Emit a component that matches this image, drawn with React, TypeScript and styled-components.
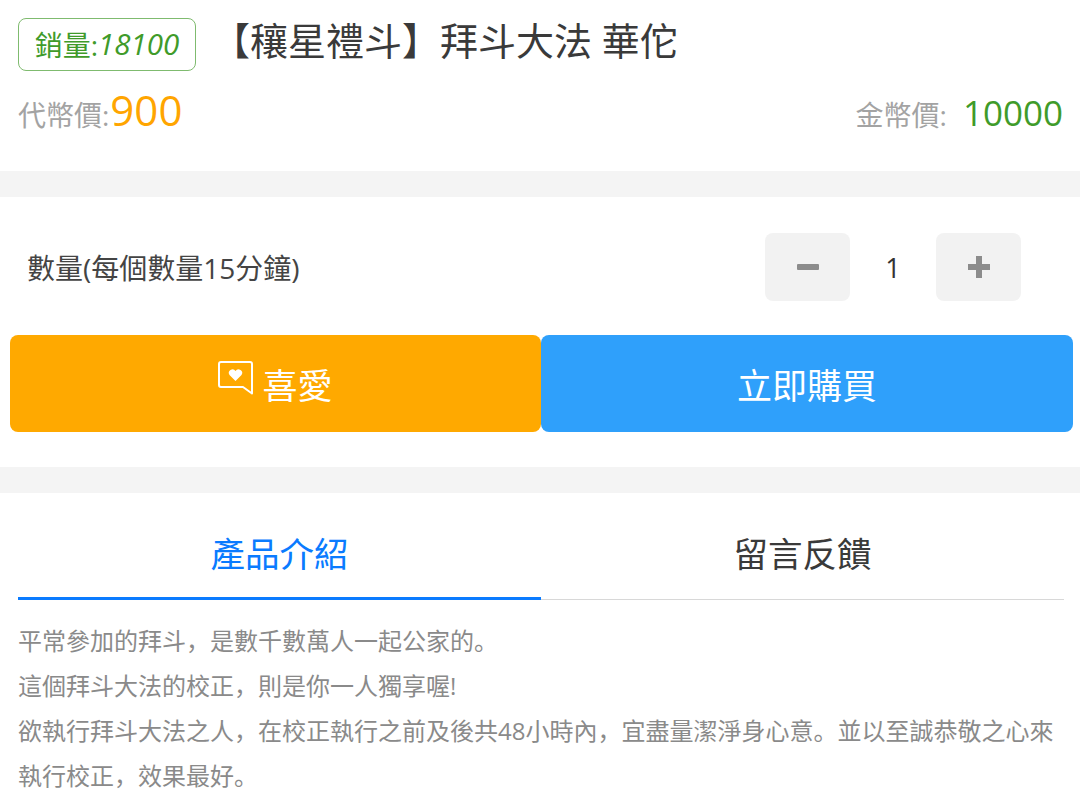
import React from 'react';
import styled, { createGlobalStyle } from 'styled-components';

const GlobalStyle = createGlobalStyle`
  html, body {
    margin: 0;
    padding: 0;
    height: 792px;
    overflow: hidden;
    background: #fff;
    font-family: "Open Sans", "Noto Sans CJK SC", sans-serif;
  }
`;

const Page = styled.div`
  width: 1080px;
`;

const Summary = styled.section`
  height: 171px;
  padding: 18px 17px 0 18px;
  box-sizing: border-box;
`;

const TitleRow = styled.div`
  display: flex;
  align-items: flex-start;
  height: 53px;
`;

const SalesBadge = styled.div`
  width: 178px;
  height: 53px;
  box-sizing: border-box;
  border: 1px solid #7fbb6f;
  border-radius: 8px;
  display: flex;
  align-items: center;
  justify-content: center;
  padding-bottom: 2px;
  color: #3f9b2a;
  font-size: 28px;
  white-space: nowrap;

  i {
    font-size: 29.5px;
  }
`;

const Title = styled.h1`
  margin: -4px 0 0 16px;
  font-size: 38px;
  line-height: 53px;
  font-weight: 400;
  color: #3a3a3a;
  white-space: nowrap;
`;

const PriceRow = styled.div`
  display: flex;
  justify-content: space-between;
  align-items: baseline;
  margin-top: 10px;
`;

const PriceLabel = styled.span`
  color: #a3a3a3;
  font-size: 28px;
`;

const TokenPrice = styled.span`
  color: #ffa500;
  font-size: 42px;
  margin-left: 1px;
`;

const GoldPrice = styled.span`
  color: #3f9b2a;
  font-size: 35px;
  margin-left: 16px;
`;

const Divider = styled.div<{ $h: number; $top?: number }>`
  height: ${(p) => p.$h}px;
  margin-top: ${(p) => p.$top ?? 0}px;
  background: #f4f4f4;
`;

const QtyRow = styled.div`
  display: flex;
  align-items: center;
  justify-content: space-between;
  height: 138px;
  box-sizing: border-box;
  padding: 2px 59px 0 27px;
`;

const QtyLabel = styled.span`
  color: #444;
  font-size: 28px;
`;

const Stepper = styled.div`
  display: flex;
  align-items: center;
`;

const StepButton = styled.div`
  width: 85px;
  height: 68px;
  border-radius: 8px;
  background: #f2f2f2;
  display: flex;
  align-items: center;
  justify-content: center;
`;

const QtyValue = styled.span`
  width: 86px;
  text-align: center;
  color: #333;
  font-size: 27px;
`;

const Actions = styled.div`
  display: grid;
  grid-template-columns: 531px 532px;
  height: 97px;
  padding-left: 10px;
`;

const ActionButton = styled.div<{ $bg: string }>`
  background: ${(p) => p.$bg};
  border-radius: 8px;
  color: #fff;
  font-size: 35px;
  display: flex;
  align-items: center;
  justify-content: center;
  gap: 9px;

  svg {
    margin-bottom: 12px;
  }
`;

const Tabs = styled.div`
  display: flex;
  margin: 0 16px 0 18px;
  height: 107px;
  border-bottom: 1px solid #d8d8d8;
  box-sizing: border-box;
`;

const Tab = styled.div<{ $active?: boolean }>`
  flex: 1;
  display: flex;
  align-items: center;
  justify-content: center;
  padding-top: 14px;
  font-size: 34.5px;
  color: ${(p) => (p.$active ? '#0a7bff' : '#3a3a3a')};
  margin-bottom: -1px;
  border-bottom: 3px solid ${(p) => (p.$active ? '#0a7bff' : 'transparent')};
`;

const Intro = styled.div`
  padding: 18px 18px 0;
  color: #8a8a8a;
  font-size: 24px;
  line-height: 45px;
`;

export default function App() {
  return (
    <Page>
      <GlobalStyle />
      <Summary>
        <TitleRow>
          <SalesBadge>
            銷量:<i>18100</i>
          </SalesBadge>
          <Title>【穰星禮斗】拜斗大法 華佗</Title>
        </TitleRow>
        <PriceRow>
          <span>
            <PriceLabel>代幣價:</PriceLabel>
            <TokenPrice>900</TokenPrice>
          </span>
          <span>
            <PriceLabel>金幣價:</PriceLabel>
            <GoldPrice>10000</GoldPrice>
          </span>
        </PriceRow>
      </Summary>
      <Divider $h={26} />
      <QtyRow>
        <QtyLabel>數量(每個數量15分鐘)</QtyLabel>
        <Stepper>
          <StepButton>
            <svg width="24" height="8" viewBox="0 0 24 8">
              <rect x="1" y="1" width="22" height="6" rx="1" fill="#8c8c8c" />
            </svg>
          </StepButton>
          <QtyValue>1</QtyValue>
          <StepButton>
            <svg width="24" height="24" viewBox="0 0 24 24">
              <path d="M9 1h6v8h8v6h-8v8H9v-8H1V9h8z" fill="#8c8c8c" />
            </svg>
          </StepButton>
        </Stepper>
      </QtyRow>
      <Actions>
        <ActionButton $bg="#ffa900">
          <svg width="35" height="34" viewBox="0 0 35 34" fill="none">
            <path d="M3 1h29a2 2 0 0 1 2 2v29.5L25 26H3a2 2 0 0 1-2-2V3a2 2 0 0 1 2-2z" stroke="#fff" strokeWidth="2" strokeLinejoin="round" />
            <path d="M17.5 20l-6-6a3.6 3.6 0 0 1 6-4 3.6 3.6 0 0 1 6 4z" fill="#fff" />
          </svg>
          喜愛
        </ActionButton>
        <ActionButton $bg="#2fa0fb">立即購買</ActionButton>
      </Actions>
      <Divider $h={26} $top={35} />
      <Tabs>
        <Tab $active>產品介紹</Tab>
        <Tab>留言反饋</Tab>
      </Tabs>
      <Intro>
        平常參加的拜斗，是數千數萬人一起公家的。
        <br />
        這個拜斗大法的校正，則是你一人獨享喔!
        <br />
        欲執行拜斗大法之人，在校正執行之前及後共48小時內，宜盡量潔淨身心意。並以至誠恭敬之心來執行校正，效果最好。
      </Intro>
    </Page>
  );
}
